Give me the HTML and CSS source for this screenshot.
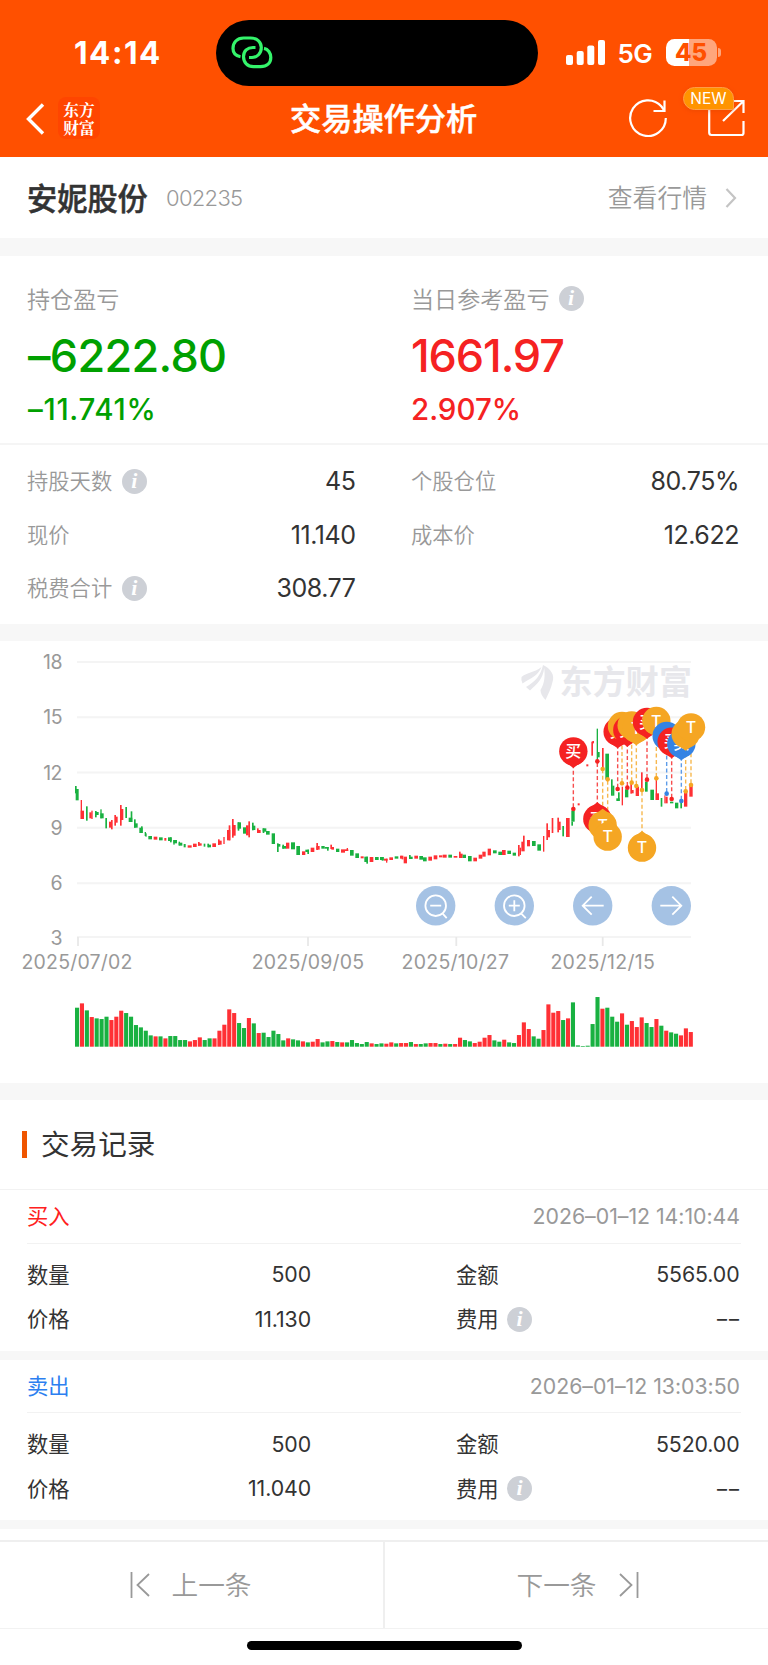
FILE: index.html
```html
<!DOCTYPE html>
<html lang="zh-CN">
<head>
<meta charset="utf-8">
<title>交易操作分析</title>
<link rel="stylesheet" href="styles.css">
</head>
<body>
<header class="header">
  <div class="status">
    <div class="clock">14:14</div>
    <div class="island">
      <svg width="42" height="34" viewBox="0 0 42 34" fill="none" stroke="#34f46b" stroke-width="3.2" stroke-linecap="butt"><path d="M9.500 20.800C4.500 19.800 2 16.500 2 12.500C2 6.500 6 2 12.500 2H19.500C26.500 2 30.300 6.500 30.300 11.500C30.300 17.500 26 21.500 21 21.500H18"/><path d="M24.500 11.500H22C16.500 11.500 12.500 15 12.500 20.500C12.500 26.500 16.500 30.600 22.500 30.600H29.500C36 30.600 39.800 27 39.800 21.500C39.800 17 37 13 33 12.300"/></svg>
    </div>
    <svg class="signal" width="39" height="25" viewBox="0 0 39 25" fill="#fff"><rect x="0" y="15" width="7" height="10" rx="2"/><rect x="10.700" y="11" width="7" height="14" rx="2"/><rect x="21.300" y="5.500" width="7" height="19.500" rx="2"/><rect x="32" y="0" width="7" height="25" rx="2"/></svg>
    <div class="network">5G</div>
    <div class="battery"><span class="battery-level">45</span><span class="battery-tip"></span></div>
  </div>
  <nav class="nav">
    <svg class="back" width="20" height="32" viewBox="0 0 20 32" fill="none" stroke="#fff" stroke-width="3.400"><path d="M17 1.500L2.500 16L17 30.500"/></svg>
    <div class="brand"><span>东方</span><span>财富</span></div>
    <h1 class="title">交易操作分析</h1>
    <svg class="refresh" width="40" height="40" viewBox="0 0 40 40" fill="none" stroke="#fff" stroke-width="2.200"><path d="M37.800 20A17.800 17.800 0 1 1 33.500 8.500L36 12"/><path d="M36.500 2.500V13H25.500"/></svg>
    <div class="share">
      <svg width="38" height="38" viewBox="0 0 38 38" fill="none" stroke="#fff" stroke-width="2.200"><path d="M2.200 8V33.500Q2.200 36 4.500 36H34.500Q36.500 36 36.500 34V22"/><path d="M25 2H36.500V14M36 2.500L16 22"/></svg>
      <span class="new">NEW</span>
    </div>
  </nav>
</header>

<section class="stock">
  <h2 class="stock-name">安妮股份</h2><span class="stock-code">002235</span>
  <a class="quote">查看行情</a>
  <svg width="12" height="20" viewBox="0 0 12 20" fill="none" stroke="#c4c4c4" stroke-width="2.200"><path d="M1.500 1L10 10L1.500 19"/></svg>
</section>

<section class="summary">
  <div class="pnl">
    <div class="pnl-col loss"><div class="pnl-label">持仓盈亏</div><div class="pnl-value">–6222.80</div><div class="pnl-rate">–11.741%</div></div>
    <div class="pnl-col gain"><div class="pnl-label">当日参考盈亏<i class="info">i</i></div><div class="pnl-value">1661.97</div><div class="pnl-rate">2.907%</div></div>
  </div>
  <div class="facts">
    <div class="fact"><span>持股天数</span><i class="info">i</i><b>45</b></div>
    <div class="fact"><span>个股仓位</span><b>80.75%</b></div>
    <div class="fact"><span>现价</span><b>11.140</b></div>
    <div class="fact"><span>成本价</span><b>12.622</b></div>
    <div class="fact"><span>税费合计</span><i class="info">i</i><b>308.77</b></div>
  </div>
</section>

<section class="chart">
  <svg id="chart" width="768" height="442" viewBox="0 641 768 442">
    <g class="grid">
      <path d="M77 662H691M77 717.200H691M77 772.500H691M77 827.700H691M77 883.300H691M77 937H691"/>
      <path class="ticks" d="M78 937V946M308 937V946M456.300 937V946M602.700 937V946"/>
    </g>
    <g class="watermark">
      <path d="M521.500 677C526 672.500 534 673 541.500 667C538 676 531 678 522.500 683.500Q520.800 680 521.500 677ZM526 687C535 682 541 675 543 665C551 669 555 675 552.500 682C551 689 548 694 545.500 700C542 696 540.500 693 540.500 690C545 683 545 675 544.200 668C543 679 537 684 530 690.500Z"/>
      <text x="559.500" y="693.500" textLength="132.500">东方财富</text>
    </g>
    <g class="axis axis-y">
      <text x="62" y="669.200">18</text><text x="62" y="724.400">15</text><text x="62" y="779.700">12</text><text x="62" y="835">9</text><text x="62" y="890">6</text><text x="62" y="945">3</text>
    </g>
    <g class="axis axis-x">
      <text x="76.700" y="969" textLength="110.500">2025/07/02</text><text x="307.700" y="969" textLength="112">2025/09/05</text><text x="455" y="969" textLength="107">2025/10/27</text><text x="602.400" y="969" textLength="104">2025/12/15</text>
    </g>
    <g id="volume"></g>
    <g id="candles"></g>
    <g id="markers"></g>
    <g class="controls">
      <g transform="translate(435.700 905.700)"><circle r="19.700"/><path d="M-5.500 0H5.500M7 8L11 12.500"/><circle class="lens" r="10.300"/></g>
      <g transform="translate(514.300 905.700)"><circle r="19.700"/><path d="M-5.500 0H5.500M0 -5.500V5.500M7 8L11.500 12.500"/><circle class="lens" r="10.300"/></g>
      <g transform="translate(592.700 905.700)"><circle r="19.700"/><path d="M11 0H-10M-1 -9L-10 0L-1 9"/></g>
      <g transform="translate(671.300 905.700)"><circle r="19.700"/><path d="M-11 0H10M1 -9L10 0L1 9"/></g>
    </g>
  </svg>
</section>

<section class="records">
  <h3 class="records-title"><span>交易记录</span></h3>
  <article class="record">
    <div class="record-head"><span class="buy">买入</span><time>2026–01–12 14:10:44</time></div>
    <div class="record-body">
      <span>数量</span><b>500</b><span class="second">金额</span><b>5565.00</b>
      <span>价格</span><b>11.130</b><span class="second">费用<i class="info">i</i></span><b class="none">––</b>
    </div>
  </article>
  <article class="record">
    <div class="record-head"><span class="sell">卖出</span><time>2026–01–12 13:03:50</time></div>
    <div class="record-body">
      <span>数量</span><b>500</b><span class="second">金额</span><b>5520.00</b>
      <span>价格</span><b>11.040</b><span class="second">费用<i class="info">i</i></span><b class="none">––</b>
    </div>
  </article>
</section>

<footer class="pager">
  <a class="page prev"><svg width="21" height="26" viewBox="0 0 21 26"><path d="M1.500 0V26M19 2L7.500 13L19 24"/></svg><span>上一条</span></a>
  <a class="page next"><span>下一条</span><svg width="21" height="26" viewBox="0 0 21 26"><path d="M19.500 0V26M2 2L13.500 13L2 24"/></svg></a>
</footer>
<div class="home"></div>
<script src="chart.js"></script>
</body>
</html>
```
FILE: styles.css
```css
* { box-sizing: border-box; }
body { margin: 0; width: 768px; background: #fff; color: #333; font-family: Inter, "Noto Sans CJK SC", sans-serif; font-weight: 400; }
h1, h2, h3 { margin: 0; }
b { font-weight: 400; }

.header { height: 157px; background: #ff5000; color: #fff; }
.status { display: flex; align-items: center; height: 86px; padding-top: 20px; }
.clock { width: 143px; margin-left: 73px; padding-left: 1px; font-size: 31.500px; line-height: 66px; font-weight: 700; letter-spacing: 1.500px; }
.island { width: 322px; height: 66px; padding: 16px 0 0 15px; border-radius: 33px; background: #000; }
.signal { margin-left: 27.500px; margin-top: -2px; }
.network { width: 48px; margin-left: 13px; font-size: 26px; font-weight: 600; letter-spacing: -0.500px; }
.battery { position: relative; width: 51px; height: 27px; margin-top: -2px; border-radius: 8.500px; background: linear-gradient(90deg, #fff 45%, #ffa67c 45%); color: #ff5000; text-align: center; }
.battery-level { font-size: 24px; line-height: 27px; font-weight: 800; }
.battery-tip { position: absolute; left: 52.500px; top: 9px; width: 3px; height: 9px; border-radius: 0 4px 4px 0; background: #ffa67c; }
.nav { display: flex; align-items: center; height: 64px; }
.back { margin-left: 26px; margin-top: 1px; }
.brand { display: flex; flex-direction: column; align-items: center; width: 42px; height: 42px; margin-left: 12px; padding-top: 4px; border-radius: 8px; background: #ff4500; font: 700 15.700px/17.500px "Noto Serif CJK SC", "Noto Sans CJK SC", sans-serif; }
.title { width: 190px; margin-left: 190px; padding-top: 1px; font-size: 31.200px; line-height: 40px; font-weight: 500; -webkit-text-stroke: 0.500px currentColor; white-space: nowrap; }
.refresh { margin-left: 148px; }
.share { position: relative; height: 38px; margin-left: 39px; }
.new { position: absolute; left: -24px; top: -12px; width: 51px; height: 23px; border: 1px solid #ff9d45; border-radius: 12px 12px 2px 12px; background: #ff9400; font-size: 15.500px; line-height: 22px; text-align: center; box-shadow: 0 1px 4px #d8400066; }

.stock { display: flex; align-items: center; height: 81px; padding: 0 31px 0 27px; }
.stock-name { width: 139px; padding-bottom: 2px; font-size: 30.200px; font-weight: 500; -webkit-text-stroke: 0.500px currentColor; }
.stock-code { font-size: 22px; font-weight: 350; color: #999; letter-spacing: -0.700px; }
.quote { margin-left: auto; margin-right: 18px; padding-bottom: 3px; font-size: 24.800px; color: #999; font-weight: 350; }

.summary { border-top: 18px solid #f7f7f7; border-bottom: 17px solid #f7f7f7; height: 403px; }
.pnl { display: grid; grid-template-columns: 384px 384px; height: 189px; padding-top: 25px; border-bottom: 2px solid #f5f5f5; }
.pnl-col { padding-left: 27px; white-space: nowrap; }
.pnl-label { display: flex; align-items: center; height: 34px; color: #999; font-size: 23.100px; font-weight: 350; }
.pnl-label .info { margin-left: 9px; }
.pnl-value { height: 44px; margin-top: 19px; font-size: 45px; line-height: 44px; font-weight: 500; letter-spacing: -1.100px; }
.pnl-rate { height: 30px; margin-top: 16px; font-size: 29.500px; line-height: 30px; font-weight: 500; letter-spacing: 0; }
.loss .pnl-value { padding-left: 1px; letter-spacing: -0.700px; }
.loss .pnl-rate { padding-left: 1px; letter-spacing: 0.700px; }
.loss { color: #00a000; }
.gain { color: #f52222; }
.facts { display: grid; grid-template-columns: 328.500px 328px; column-gap: 55.500px; grid-auto-rows: 53.500px; padding: 10px 0 0 27px; }
.fact { display: flex; align-items: center; color: #999; font-size: 21.300px; font-weight: 350; }
.fact span { padding-bottom: 4px; }
.fact b { margin-left: auto; padding-bottom: 1px; color: #333; font-size: 25px; letter-spacing: -0.450px; }
.info { display: inline-block; flex: none; width: 25px; height: 25px; margin-left: 9.500px; border-radius: 50%; background: #cdd0d6; color: #fff; font: italic 700 22px/24px "Liberation Serif", serif; text-align: center; }

.chart { height: 442px; overflow: hidden; }
.chart svg { display: block; }
.grid path { fill: none; stroke: #f4f4f4; stroke-width: 2; }
.grid .ticks { stroke: #e8e8e8; stroke-width: 1.800; }
.watermark { fill: #e7e7eb; font: 700 33px "Noto Sans CJK SC", sans-serif; }
.axis { fill: #999; font-size: 19.500px; letter-spacing: -0.500px; }
.axis-y { text-anchor: end; }
.axis-x { text-anchor: middle; }
.up { fill: #ff3035; }
.down { fill: #19b141; }
.stem { fill: none; stroke-width: 1.400; stroke-dasharray: 4 2.500; opacity: .8; }
.pin-text { fill: #fff; font-size: 16px; font-weight: 500; text-anchor: middle; }
.controls circle { fill: #a5c2e4; }
.controls path, .controls .lens { fill: none; stroke: #fff; stroke-width: 1.800; }

.records { border-top: 17px solid #f7f7f7; height: 446px; }
.records-title { display: flex; align-items: center; height: 90px; padding-left: 22px; border-bottom: 1px solid #f2f2f2; font-size: 28.600px; font-weight: 400; }
.records-title span { padding-bottom: 4px; }
.records-title::before { content: ""; width: 5px; height: 27px; margin-right: 14px; background: #ef5500; }
.record { height: 169.500px; padding: 0 27px; border-bottom: 9px solid #f7f7f7; font-size: 21.300px; }
.record-head { display: flex; align-items: center; justify-content: space-between; height: 53.500px; border-bottom: 1px solid #f2f2f2; }
.record-head span { padding-bottom: 3px; }
.record-head time { color: #999; font-size: 21.300px; letter-spacing: -0.030px; margin-right: 1px; }
.buy { color: #ff2020; }
.sell { color: #2c7ff0; }
.record-body { display: grid; grid-template-columns: 60px 224px 204px 224.500px; grid-auto-rows: 44.500px; align-items: center; padding-top: 9px; }
.record-body > span { padding-bottom: 3px; }
.record-body b { padding-bottom: 1px; text-align: right; letter-spacing: -0.100px; }
.record-body .none { padding-bottom: 0; letter-spacing: 2px; margin-right: -1.500px; font-size: 20px; }
.record-body .second { display: flex; align-items: center; padding-left: 145px; white-space: nowrap; }
.second .info { margin-top: 3px; margin-left: 8.500px; }

.pager { display: grid; grid-template-columns: 385px 383px; height: 89px; margin-top: 11px; border-top: 2px solid #efefef; border-bottom: 1px solid #f2f2f2; }
.page { display: flex; align-items: center; gap: 21px; color: #999; font-size: 26.700px; font-weight: 350; }
.page span { padding-bottom: 4px; }
.page path { fill: none; stroke: #999; stroke-width: 1.800; }
.prev { padding-left: 129.500px; border-right: 2px solid #efefef; }
.next { padding-left: 131.500px; }
.home { width: 275px; height: 9px; margin: 12px 0 0 246.500px; border-radius: 5px; background: #000; }
```
FILE: chart.js
```js
const NS = 'http://www.w3.org/2000/svg';
const make = (parent, tag, attrs, text) => {
  const el = document.createElementNS(NS, tag);
  for (const k in attrs) el.setAttribute(k, attrs[k]);
  if (text) el.textContent = text;
  parent.appendChild(el);
  return el;
};

// Daily volume in thirds of a pixel, with the direction of the day.
const volume = ('g117 r130 g109 r89 g85 g83 g90 r80 r90 r108 g101 g90 g65 g58 g48 g34 r31 g31 r25 g32 g32 g20 g20 r16 r20 r28 g20 g25 r25 r48 r66 r112 r101 g71 g56 r86 g70 r41 g42 g29 g48 g38 g19 r25 g22 g19 ' +
  'r16 g13 r15 r23 g13 g16 r17 g14 r13 g13 g20 g11 g8 g14 r10 g8 g10 r9 r13 g10 r11 r11 g14 r8 g8 g10 r11 r11 g8 r9 g8 r8 r27 g20 g16 r11 r15 r27 r35 g19 g15 r21 g13 g11 r35 r73 r53 ' +
  'g31 g24 r50 r127 r102 r107 g80 r85 g133 g4 g2 g3 g68 g149 r114 g117 g90 g75 r100 g66 r77 r59 r88 g71 g59 r83 g63 r48 g43 g39 r34 r55 r44').split(' ');
const vol = document.getElementById('volume');
volume.forEach((v, i) => {
  const h = v.slice(1) / 3;
  make(vol, 'rect', { class: v[0] === 'r' ? 'up' : 'down', x: 75 + 4.91 * i, y: 1046.7 - h, width: 4.1, height: h });
});

// Candle bodies and wicks: x1 y1 x2 y2 in thirds of a pixel from each block's origin.
const candles = [
  [60, 640, 'g45 438 50 460,g47 447 56 481,r62 480 66 537,r62 512 72 537,g78 499 83 542,r88 517 95 535,r94 512 98 537,g105 513 110 532,g108 516 116 525,g121 508 125 535,g121 520 131 535,g136 534 141 565,r147 545 155 563,r153 540 158 568,r163 525 168 557,r166 530 173 548,r180 495 185 557,r183 507 190 540,g196 501 201 534,g206 533 217 546,g212 514 217 546,g222 538 227 563,g222 550 233 563,g238 563 248 579,g243 559 248 579,g254 576 258 588,g256 580 260 590,g265 588 276 598,r281 590 292 599,g297 592 308 601,r313 594 319 602,g324 592 335 603,g330 592 335 607,g340 600 351 610,g340 600 344 614,g356 605 360 616,g356 608 367 617,g371 612 377 622,r383 616 395 623,r399 611 410 621,r414 606 419 617,r414 610 425 617,g431 611 436 620,g442 611 447 622,g445 614 453 622,r457 610 468 621,r474 598 479 615,r474 602 485 614,r490 591 494 612,r501 570 511 601,r506 556 511 601,r516 537 521 593,r518 555 527 587,g533 547 543 566,g533 547 538 572,g549 562 559 581,r558 556 566 586,r565 544 570 592,g576 548 581 571,g576 557 586 570,r591 565 596 579,r591 570 602 579,g608 565 613 579,g608 565 619 575,g618 573 629 584,g635 580 645 612,g651 610 656 636,g651 612 661 620,g667 614 672 626,g667 618 679 626,r678 608 688 626'],
  [290, 740, 'g3 307 15 328,g19 318 30 345,r36 334 46 345,g46 329 57 336,g52 329 57 342,r62 323 73 336,r79 309 84 330,r79 318 89 329,g94 318 104 326,g104 321 116 326,g111 321 116 332,r121 314 126 327,r124 321 132 329,g138 326 148 336,r153 328 165 338,r165 328 175 333,r170 324 174 333,g180 330 191 347,g196 340 207 354,r212 349 221 355,g223 350 233 366,g229 350 234 371,r239 351 250 366,g255 351 266 360,g270 351 281 360,g275 351 281 362,r282 356 293 362,r288 356 292 368,r298 352 309 360,g314 349 325 356,r330 347 336 356,r335 347 340 358,r341 350 351 370,g357 345 362 357,g357 350 368 357,r373 347 384 356,g388 348 399 359,g399 352 410 364,r415 350 426 362,r431 346 442 358,r447 346 457 352,r458 344 470 353,g475 344 486 353,r491 348 502 353,r507 335 512 354,r507 341 518 354,g518 344 528 354,g534 348 545 364,r550 353 561 364,r566 344 577 356,r577 335 587 350,r593 326 603 346,g609 331 620 340,g625 335 636 345,r636 330 647 345,g652 332 663 342,g668 338 678 347,r684 315 689 349,r689 323 693 345,r694 305 699 334,r699 287 704 334'],
  [510, 640, 'r51 600 60 619,g66 603 77 618,g82 613 93 632,r99 588 103 635,r109 550 114 600,r113 570 120 592,r125 534 130 579,r142 533 147 577,r146 545 152 570,g157 558 162 589,r168 534 179 591,g184 512 194 545,g184 545 189 557,r203 490 209 496,r229 373 235 379,r244 305 249 347,r247 303 252 310,g260 266 264 360,g264 336 269 352,r276 324 281 388,g286 341 297 418,g303 418 308 467,g307 437 313 467,g319 475 329 483,g324 457 329 483,r335 440 339 496,g345 448 355 472,r361 432 366 461,r366 450 371 460,r377 440 387 468,r393 397 398 450,g405 425 413 455,g421 449 432 480,r437 420 441 480,r437 460 447 480,g452 474 457 500,r463 466 466 490,r466 470 473 490,g480 485 490 490,g495 488 505 505,g511 485 516 505,r522 455 532 500,r538 432 548 470']
];
const cg = document.getElementById('candles');
for (const [ox, oy, list] of candles) {
  for (const item of list.split(',')) {
    const [x1, y1, x2, y2] = item.slice(1).split(' ').map(Number);
    make(cg, 'rect', { class: item[0] === 'r' ? 'up' : 'down', x: ox + x1 / 3, y: oy + y1 / 3, width: (x2 - x1) / 3, height: (y2 - y1) / 3 });
  }
}

// Trade pins: colour, letter, centre x, centre y, y of the traded price (thirds of a pixel).
const red = '#f52222', gold = '#f5a623', blue = '#3583e4';
const pins = [
  [red, '买', 190, 334, 507], [red, '买', 323, 275, 447], [gold, '', 336, 258, 430], [red, '买', 352, 270, 443],
  [gold, '', 365, 256, 428], [gold, 'T', 379, 266, 438], [red, '买', 411, 246, 419], [gold, 'T', 439, 243, 415],
  [blue, '', 470, 288, 461], [red, '买', 485, 305, 477], [blue, '卖', 514, 311, 483], [gold, '', 527, 282, 454],
  [gold, 'T', 543, 262, 435], [red, '买', 262, 537, 364], [gold, 'T', 278, 556, 387], [gold, 'T', 293, 590, 418],
  [gold, 'T', 396, 623, 450]
];
const mg = document.getElementById('markers');
for (const [color, , x, y, end] of pins) {
  const X = 510 + x / 3;
  make(mg, 'path', { class: 'stem', stroke: color, d: `M${X} ${640 + y / 3}V${640 + end / 3}` });
  make(mg, 'circle', { fill: color, cx: X, cy: 640 + end / 3, r: 2.3 });
}
for (const [color, letter, x, y, end] of pins) {
  const g = make(mg, 'g', { transform: `translate(${510 + x / 3} ${640 + y / 3})` });
  const s = end > y ? 1 : -1;
  make(g, 'circle', { r: 14.2, fill: color });
  make(g, 'path', { fill: color, d: `M-10 ${10 * s}Q-4 ${13.5 * s} 0 ${16.7 * s}Q4 ${13.5 * s} 10 ${10 * s}Z` });
  if (letter) make(g, 'text', { class: 'pin-text', y: 5.8 }, letter);
}
```
